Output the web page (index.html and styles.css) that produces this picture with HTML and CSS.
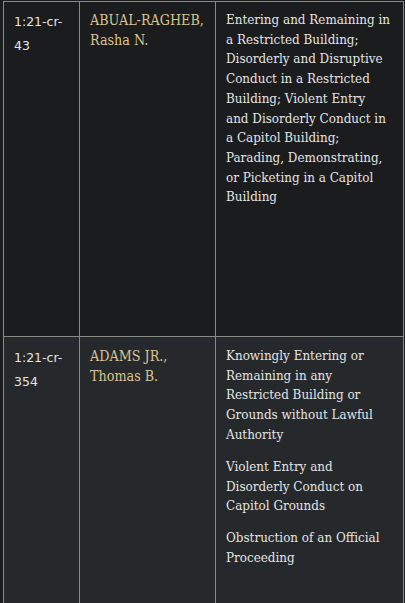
FILE: index.html
```html
<!DOCTYPE html>
<html><head><meta charset="utf-8"><link rel="stylesheet" href="styles.css"></head>
<body>
<table class="cases">
  <colgroup><col class="c-num"><col class="c-name"><col class="c-charge"></colgroup>
  <tbody>
    <tr class="row-dark">
      <td class="num">1:21-cr-<br>43</td>
      <td class="name">ABUAL-RAGHEB, Rasha N.</td>
      <td class="charge"><p>Entering and Remaining in a Restricted Building; Disorderly and Disruptive Conduct in a Restricted Building; Violent Entry and Disorderly Conduct in a Capitol Building; Parading, Demonstrating, or Picketing in a Capitol Building</p></td>
    </tr>
    <tr class="row-light">
      <td class="num">1:21-cr-<br>354</td>
      <td class="name">ADAMS JR., Thomas B.</td>
      <td class="charge">
        <p>Knowingly Entering or Remaining in any Restricted Building or Grounds without Lawful Authority</p>
        <p>Violent Entry and Disorderly Conduct on Capitol Grounds</p>
        <p>Obstruction of an Official Proceeding</p>
      </td>
    </tr>
  </tbody>
</table>
</body></html>
```
FILE: styles.css
```css
html, body { margin: 0; padding: 0; background: #1b1c1e; }
body { padding: 1px 0 0 3px; }
.cases {
  border-collapse: collapse;
  table-layout: fixed;
  width: 400px;
}
.c-num { width: 76px; }
.c-name { width: 136px; }
.c-charge { width: 188px; }
.cases td {
  border: 1px solid #8a8a84;
  vertical-align: top;
  padding: 8px 10px;
  color: #e4e4e2;
}
.row-dark td { background: #1b1c1e; height: 318px; }
.row-light td { background: #26292c; height: 316px; padding-top: 9px; }
.num {
  font-family: "DejaVu Sans", sans-serif;
  font-size: 12.5px;
  line-height: 24px;
}
.name {
  font-family: "DejaVu Serif", serif;
  font-stretch: condensed;
  font-size: 14.2px;
  line-height: 20px;
  color: #d9c48f !important;
}
.cases td.charge {
  font-family: "DejaVu Serif", serif;
  font-stretch: condensed;
  font-size: 13.3px;
  line-height: 19.7px;
  padding-right: 13px;
}
.charge p { margin: 0 0 12.4px; }
.charge p:last-child { margin-bottom: 0; }
```
